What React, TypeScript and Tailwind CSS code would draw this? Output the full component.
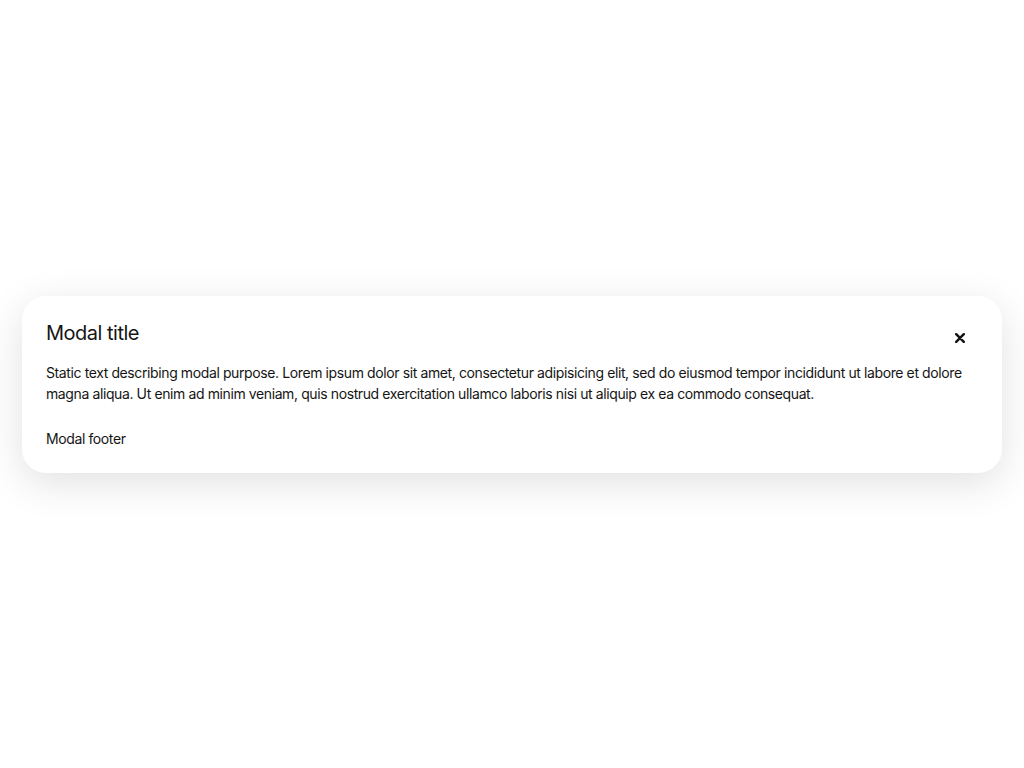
import React from 'react';

function CloseIcon() {
  return (
    <svg viewBox="0 0 10 10" className="w-[10px] h-[10px]" aria-hidden="true">
      <path d="M1.2 1.2 L8.8 8.8 M8.8 1.2 L1.2 8.8" stroke="#151515" strokeWidth="2.5" strokeLinecap="round" />
    </svg>
  );
}

export default function App() {
  return (
    <div
      className="min-h-[768px] w-full bg-white flex items-center justify-center px-[22px] text-[#151515]"
      style={{ fontFamily: 'Inter, "Noto Sans", sans-serif' }}
    >
      <div className="relative w-full bg-white rounded-[24px] shadow-[0_10px_40px_rgba(0,0,0,0.12)] pt-6 pb-6">
        <button
          type="button"
          aria-label="Close"
          className="absolute top-6 right-6 w-9 h-9 flex items-center justify-center"
        >
          <CloseIcon />
        </button>

        {/* Header */}
        <div className="px-6 pr-[72px]">
          <h1 className="text-[20px] leading-[26px] tracking-[-0.025em]">Modal title</h1>
        </div>

        {/* Body */}
        <div className="px-6 mt-4 text-[14px] leading-[21px] tracking-[-0.028em]">
          Static text describing modal purpose. Lorem ipsum dolor sit amet, consectetur adipisicing elit, sed do eiusmod tempor
          incididunt ut labore et dolore magna aliqua. Ut enim ad minim veniam, quis nostrud exercitation ullamco laboris nisi ut
          aliquip ex ea commodo consequat.
        </div>

        {/* Footer */}
        <div className="px-6 mt-6 text-[14px] leading-[21px] tracking-[-0.028em]">Modal footer</div>
      </div>
    </div>
  );
}
